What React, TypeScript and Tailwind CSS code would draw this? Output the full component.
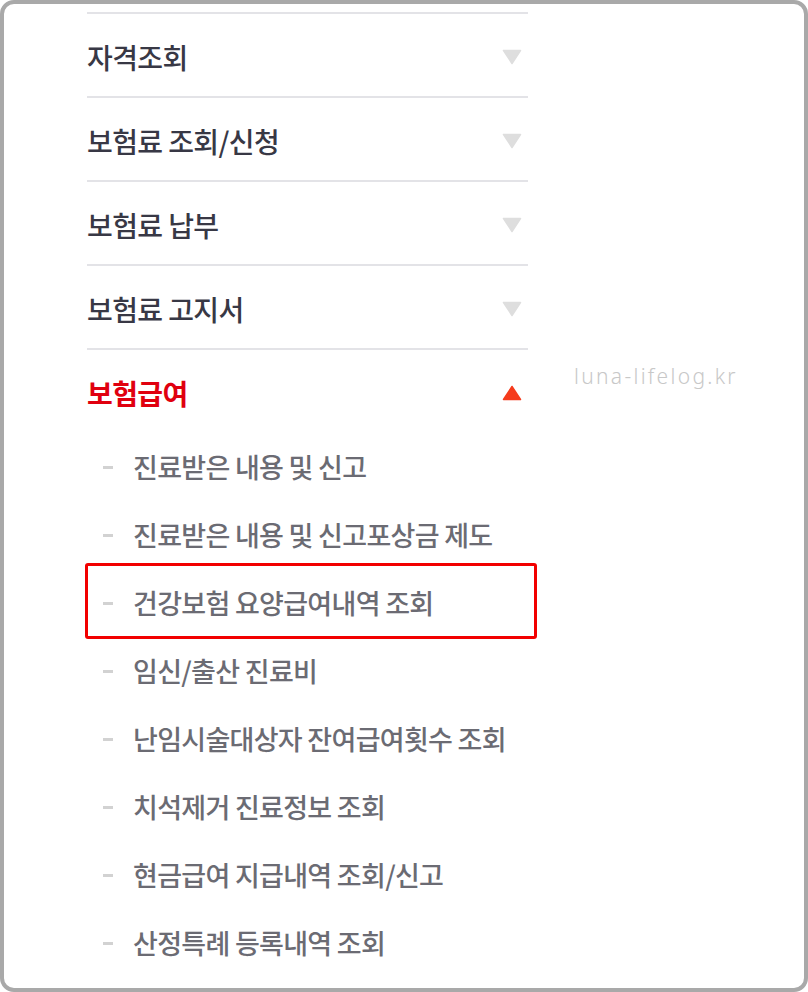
const mainMenu = ["자격조회", "보험료 조회/신청", "보험료 납부", "보험료 고지서"];

const subMenu = [
  "진료받은 내용 및 신고",
  "진료받은 내용 및 신고포상금 제도",
  "건강보험 요양급여내역 조회",
  "임신/출산 진료비",
  "난임시술대상자 잔여급여횟수 조회",
  "치석제거 진료정보 조회",
  "현금급여 지급내역 조회/신고",
  "산정특례 등록내역 조회",
];

function Arrow({ open }: { open?: boolean }) {
  return (
    <svg width="20" height="16" viewBox="0 0 20 16" className="mr-[6px]">
      {open ? (
        <path d="M10 1.5 L18.5 14.5 L1.5 14.5 Z" fill="#f53b1c" stroke="#f53b1c" strokeWidth="1.5" strokeLinejoin="round" />
      ) : (
        <path d="M1.5 1.5 L18.5 1.5 L10 14.5 Z" fill="#dedede" stroke="#dedede" strokeWidth="1.5" strokeLinejoin="round" />
      )}
    </svg>
  );
}

export default function App() {
  return (
    <div
      className="w-[808px] h-[992px] bg-white border-[4px] border-[#a9a9a9] rounded-[14px] overflow-hidden relative"
      style={{ fontFamily: '"Noto Sans CJK KR", "Noto Sans", sans-serif' }}
    >
      <div className="ml-[83px] mt-[8px] w-[441px]">
        {/* 상위 메뉴 */}
        {mainMenu.map((label) => (
          <div key={label} className="border-t-2 border-[#e3e3e7] h-[84px] pt-[3px] flex items-center justify-between">
            <span className="text-[28px] font-medium tracking-[-0.6px] text-[#383845]">{label}</span>
            <Arrow />
          </div>
        ))}
        <div className="border-t-2 border-[#e3e3e7] h-[85px] pt-[3px] flex items-center justify-between">
          <span className="text-[28px] font-bold tracking-[-0.6px] text-[#e0000f]">보험급여</span>
          <Arrow open />
        </div>

        {/* 하위 메뉴 */}
        <div className="flex flex-col">
          {subMenu.map((label, i) => (
            <div key={label} className="relative h-[68px] flex items-center">
              <span className="w-[10px] h-[3px] bg-[#d2d2d2] ml-[16px] mr-[20px]" />
              <span className="text-[27px] font-medium tracking-[-0.7px] text-[#6b6b73]">{label}</span>
              {i === 2 && (
                <span className="absolute left-[-2px] right-[-9px] top-[-6px] bottom-[-2px] border-[3px] border-[#f20000] rounded-[3px]" />
              )}
            </div>
          ))}
        </div>
      </div>

      <div
        className="absolute left-[570px] top-[357px] text-[21px] text-[#c8c8c8] tracking-[2.3px]"
        style={{ fontFamily: '"Noto Sans", sans-serif', fontWeight: 300 }}
      >
        luna-lifelog.kr
      </div>
    </div>
  );
}
